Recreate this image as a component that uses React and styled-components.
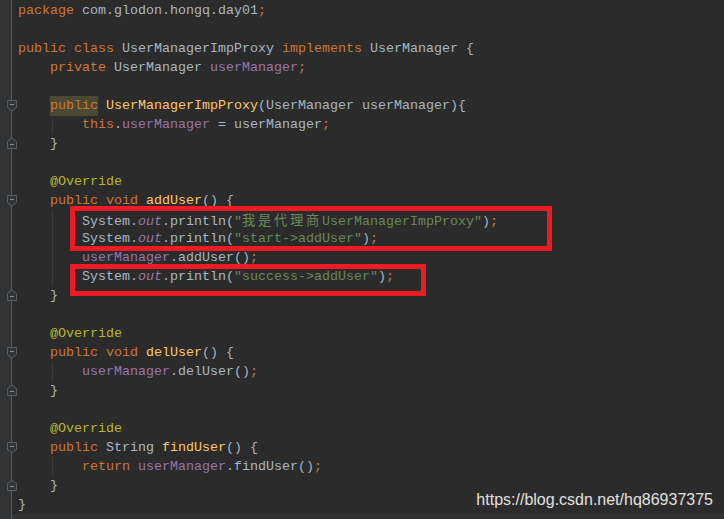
import styled, { createGlobalStyle } from 'styled-components';

const GlobalStyle = createGlobalStyle`
  html, body {
    margin: 0;
    padding: 0;
    background: #2b2b2b;
  }
`;

const colors = {
  plain: '#a9b7c6',
  kw: '#cc7832',
  field: '#9876aa',
  str: '#6a8759',
  fn: '#ffc66d',
  ann: '#bbb529',
  out: '#9876aa',
  cjk: '#6a8759',
  hl: '#cc7832',
};

// each line: [fold, guide, tokens]
const lines = [
  [null, false, [['kw', 'package'], ['plain', ' com.glodon.hongq.day01'], ['kw', ';']]],
  [null, false, []],
  [null, false, [['kw', 'public class '], ['plain', 'UserManagerImpProxy '], ['kw', 'implements '], ['plain', 'UserManager {']]],
  [null, false, [['plain', '    '], ['kw', 'private '], ['plain', 'UserManager '], ['field', 'userManager'], ['kw', ';']]],
  [null, false, []],
  ['open', false, [['plain', '    '], ['hl', 'public'], ['plain', ' '], ['fn', 'UserManagerImpProxy'], ['plain', '(UserManager userManager){']]],
  [null, true, [['plain', '        '], ['kw', 'this'], ['plain', '.'], ['field', 'userManager'], ['plain', ' = userManager'], ['kw', ';']]],
  ['close', false, [['plain', '    }']]],
  [null, false, []],
  [null, false, [['plain', '    '], ['ann', '@Override']]],
  ['open', false, [['plain', '    '], ['kw', 'public void '], ['fn', 'addUser'], ['plain', '() {']]],
  [null, true, [['plain', '        System.'], ['out', 'out'], ['plain', '.println('], ['str', '"'], ['cjk', '我是代理商'], ['str', 'UserManagerImpProxy"'], ['plain', ')'], ['kw', ';']]],
  [null, true, [['plain', '        System.'], ['out', 'out'], ['plain', '.println('], ['str', '"start->addUser"'], ['plain', ')'], ['kw', ';']]],
  [null, true, [['plain', '        '], ['field', 'userManager'], ['plain', '.addUser()'], ['kw', ';']]],
  [null, true, [['plain', '        System.'], ['out', 'out'], ['plain', '.println('], ['str', '"success->addUser"'], ['plain', ')'], ['kw', ';']]],
  ['close', false, [['plain', '    }']]],
  [null, false, []],
  [null, false, [['plain', '    '], ['ann', '@Override']]],
  ['open', false, [['plain', '    '], ['kw', 'public void '], ['fn', 'delUser'], ['plain', '() {']]],
  [null, true, [['plain', '        '], ['field', 'userManager'], ['plain', '.delUser()'], ['kw', ';']]],
  ['close', false, [['plain', '    }']]],
  [null, false, []],
  [null, false, [['plain', '    '], ['ann', '@Override']]],
  ['open', false, [['plain', '    '], ['kw', 'public '], ['plain', 'String '], ['fn', 'findUser'], ['plain', '() {']]],
  [null, true, [['plain', '        '], ['kw', 'return '], ['field', 'userManager'], ['plain', '.findUser()'], ['kw', ';']]],
  ['close', false, [['plain', '    }']]],
  [null, false, [['plain', '}']]],
];

function FoldMarker({ type }) {
  const open = type === 'open';
  return (
    <Marker $open={open}>
      <svg width="12" height="12" viewBox="0 0 12 12">
        <path
          d={open ? 'M1.5 0.5H10.5V7.5L6 11L1.5 7.5Z' : 'M1.5 11.5H10.5V4.5L6 1L1.5 4.5Z'}
          fill="#313335"
          stroke="#5e6164"
        />
        <path d={open ? 'M4 4.5H8' : 'M4 7.5H8'} stroke="#8e9194" />
      </svg>
    </Marker>
  );
}

export default function App() {
  return (
    <>
      <GlobalStyle />
      <Page>
        <Editor>
          <Row $top>
            <Gutter />
            <Code />
          </Row>
          {lines.map(([fold, guide, tokens], i) => (
            <Row key={i}>
              <Gutter>{fold && <FoldMarker type={fold} />}</Gutter>
              <Code $guide={guide}>
                {tokens.map(([kind, text], j) => (
                  <Tok key={j} $kind={kind}>
                    {text}
                  </Tok>
                ))}
              </Code>
            </Row>
          ))}
          <Row $footer>
            <Gutter />
            <Code />
          </Row>
        </Editor>
        <Highlight $left={70} $top={206} $width={482} $height={45} />
        <Highlight $left={70} $top={264} $width={356} $height={32} />
        <Watermark>https://blog.csdn.net/hq86937375</Watermark>
      </Page>
    </>
  );
}

const Page = styled.div`
  position: relative;
  width: 724px;
  height: 519px;
  overflow: hidden;
  background: #2b2b2b;
`;

const Editor = styled.div`
  display: flex;
  flex-direction: column;
  height: 100%;
  font-family: 'Liberation Mono', 'Noto Sans CJK SC', monospace;
  font-size: 13.333px;
`;

const Row = styled.div`
  display: flex;
  height: ${(p) => (p.$top ? '1px' : p.$footer ? 'auto' : '19px')};
  flex: ${(p) => (p.$footer ? '1' : 'none')};
  background: ${(p) => (p.$footer ? '#313335' : 'transparent')};
`;

const Gutter = styled.div`
  position: relative;
  width: 11px;
  flex: none;
  background: #313335;
  border-right: 1px solid #555759;
`;

const Marker = styled.div`
  position: absolute;
  left: 6px;
  top: ${(p) => (p.$open ? '4px' : '3px')};
  width: 12px;
  height: 12px;
  z-index: 2;
  svg {
    display: block;
  }
`;

const Code = styled.div`
  position: relative;
  flex: 1;
  padding-left: 6px;
  line-height: 19px;
  white-space: pre;
  color: #a9b7c6;
  &::before {
    content: '';
    display: ${(p) => (p.$guide ? 'block' : 'none')};
    position: absolute;
    left: 40px;
    top: 0;
    bottom: 0;
    width: 1px;
    background: #3b3b3b;
  }
`;

const Tok = styled.span`
  color: ${(p) => colors[p.$kind] || '#a9b7c6'};
  font-style: ${(p) => (p.$kind === 'out' ? 'italic' : 'normal')};
  background: ${(p) => (p.$kind === 'hl' ? '#4a4a33' : 'transparent')};
  ${(p) =>
    p.$kind === 'cjk' &&
    `
    font-family: 'Noto Sans CJK SC', sans-serif;
    letter-spacing: 2.667px;
  `}
  ${(p) =>
    p.$kind === 'hl' &&
    `
    display: inline-block;
    height: 20px;
  `}
`;

const Highlight = styled.div`
  position: absolute;
  left: ${(p) => p.$left}px;
  top: ${(p) => p.$top}px;
  width: ${(p) => p.$width}px;
  height: ${(p) => p.$height}px;
  box-sizing: border-box;
  border: 5px solid #ed1c24;
`;

const Watermark = styled.div`
  position: absolute;
  right: 11px;
  top: 491px;
  font-family: 'Liberation Sans', Arial, sans-serif;
  font-size: 16px;
  line-height: 18px;
  color: #e0e0e0;
`;
